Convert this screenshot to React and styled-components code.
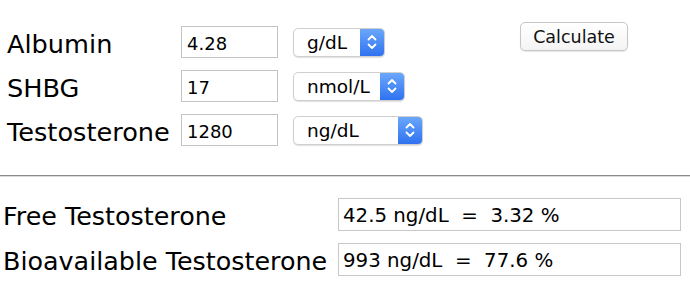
import React from 'react'
import styled, { createGlobalStyle } from 'styled-components'

const GlobalStyle = createGlobalStyle`
    body {
        margin: 0;
        background: #ffffff;
        font-family: "DejaVu Sans", Verdana, sans-serif;
        color: #000;
    }
`

const Page = styled.div`
    width: 690px;
    height: 288px;
    overflow: hidden;
`

const TopSection = styled.div`
    display: flex;
    justify-content: space-between;
    padding: 22px 62px 0 7px;
    height: 175px;
    box-sizing: border-box;
`

const InputGrid = styled.div`
    display: grid;
    grid-template-columns: 174px 112px auto;
    grid-auto-rows: 32px;
    row-gap: 12px;
    align-items: center;
    padding-top: 4px;
`

const Label = styled.div`
    font-size: 25.6px;
    line-height: 32px;
    padding-top: 3px;
    white-space: nowrap;
`

const NumberInput = styled.input`
    width: 97px;
    height: 32px;
    box-sizing: border-box;
    border: 1px solid #c4c4c4;
    padding: 2px 5px 0;
    font-family: "DejaVu Sans", Verdana, sans-serif;
    font-size: 18px;
    color: #000;
    outline: none;
`

const SelectBox = styled.div`
    display: flex;
    align-items: stretch;
    width: ${p => p.$width}px;
    height: 29px;
    box-sizing: border-box;
    border: 1px solid #cfcfcf;
    border-radius: 5px;
    box-shadow: 0 1px 1px rgba(0, 0, 0, 0.12);
    overflow: hidden;
    background: #fff;
`

const SelectText = styled.select`
    flex: 1;
    appearance: none;
    border: none;
    background: transparent;
    padding: 0 0 0 13px;
    font-family: "DejaVu Sans", Verdana, sans-serif;
    font-size: 18.5px;
    color: #000;
    outline: none;
`

const Stepper = styled.div`
    width: 24px;
    display: flex;
    align-items: center;
    justify-content: center;
    background: linear-gradient(#6aa7fb, #2f72f0);
`

const CalcButton = styled.button`
    width: 108px;
    height: 29px;
    border: 1px solid #c6c6c6;
    border-radius: 5px;
    background: linear-gradient(#ffffff, #f4f4f4);
    box-shadow: 0 1px 1px rgba(0, 0, 0, 0.1);
    font-family: "DejaVu Sans", Verdana, sans-serif;
    font-size: 17.5px;
    color: #111;
    padding: 0;
`

const Divider = styled.hr`
    margin: 0;
    border: none;
    height: 2px;
    background: linear-gradient(#8a8a8a 50%, #dcdcdc 50%);
`

const Results = styled.div`
    display: grid;
    grid-template-columns: 335px 343px;
    grid-auto-rows: 33px;
    row-gap: 12px;
    align-items: center;
    padding: 21px 0 0 3px;
`

const ResultLabel = styled.div`
    font-size: 25.4px;
    white-space: nowrap;
    line-height: 33px;
    padding-top: 3px;
`

const ResultBox = styled.input`
    width: 343px;
    height: 33px;
    box-sizing: border-box;
    border: 1px solid #c8c8c8;
    padding: 2px 4px 0;
    font-family: "DejaVu Sans", Verdana, sans-serif;
    font-size: 19.8px;
    color: #000;
    white-space: pre;
    outline: none;
`

function Chevrons() {
    return (
        <svg width="12" height="18" viewBox="0 0 12 18">
            <path d="M2.5 6.5 L6 3 L9.5 6.5 M2.5 11.5 L6 15 L9.5 11.5"
                fill="none" stroke="#fff" strokeWidth="1.8" strokeLinecap="round" strokeLinejoin="round" />
        </svg>
    )
}

function UnitSelect({ value, width }) {
    return (
        <SelectBox $width={width}>
            <SelectText defaultValue={value}>
                <option>{value}</option>
            </SelectText>
            <Stepper><Chevrons /></Stepper>
        </SelectBox>
    )
}

const rows = [
    { name: 'Albumin', value: '4.28', unit: 'g/dL', width: 92 },
    { name: 'SHBG', value: '17', unit: 'nmol/L', width: 112 },
    { name: 'Testosterone', value: '1280', unit: 'ng/dL', width: 130 },
]

const results = [
    { name: 'Free Testosterone', value: '42.5 ng/dL  =  3.32 %' },
    { name: 'Bioavailable Testosterone', value: '993 ng/dL  =  77.6 %' },
]

export default function App() {
    return (
        <Page>
            <GlobalStyle />
            <TopSection>
                <InputGrid>
                    {rows.map(r => (
                        <React.Fragment key={r.name}>
                            <Label>{r.name}</Label>
                            <NumberInput defaultValue={r.value} />
                            <UnitSelect value={r.unit} width={r.width} />
                        </React.Fragment>
                    ))}
                </InputGrid>
                <div>
                    <CalcButton>Calculate</CalcButton>
                </div>
            </TopSection>
            <Divider />
            <Results>
                {results.map(r => (
                    <React.Fragment key={r.name}>
                        <ResultLabel>{r.name}</ResultLabel>
                        <ResultBox readOnly value={r.value} />
                    </React.Fragment>
                ))}
            </Results>
        </Page>
    )
}
